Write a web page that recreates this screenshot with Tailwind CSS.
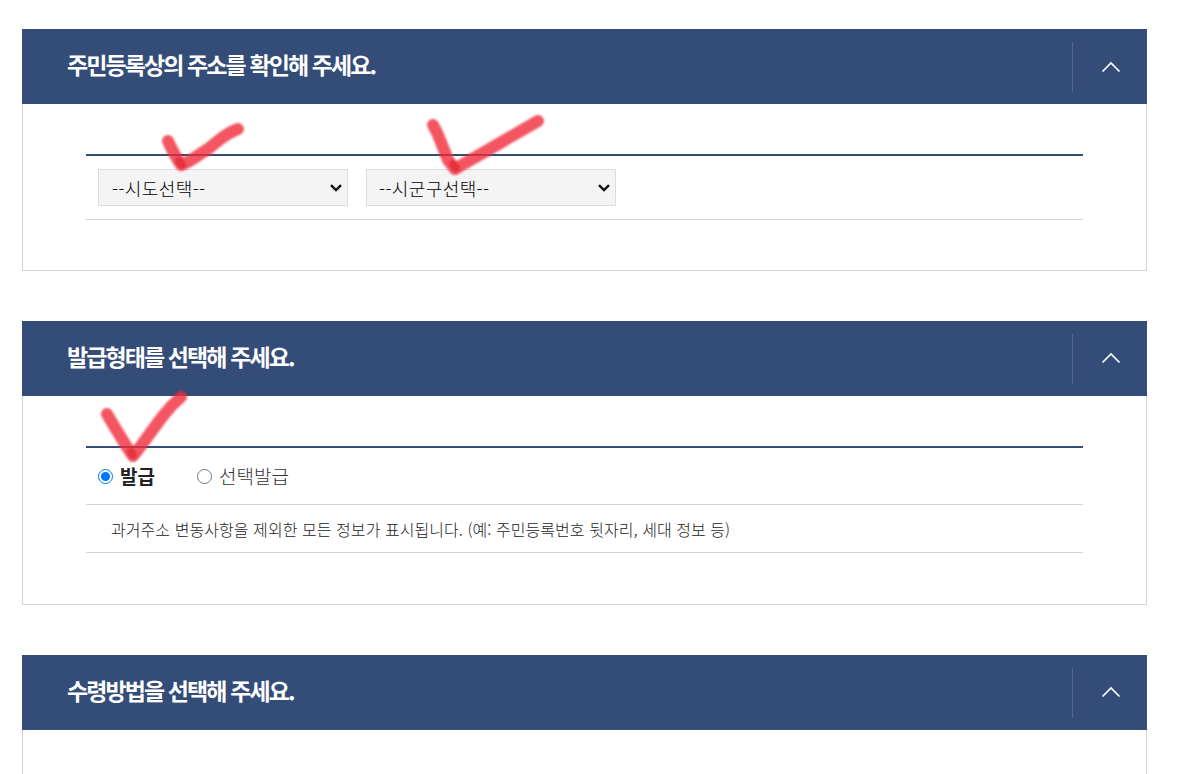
<!DOCTYPE html>
<html lang="ko">
<head>
    <meta charset="UTF-8">
    <title>주민등록표 초본 발급</title>
    <script src="https://cdn.jsdelivr.net/npm/@tailwindcss/browser@4"></script>
</head>
<body class="bg-white h-[774px] overflow-hidden font-['Noto_Sans_CJK_KR',sans-serif] text-[#333]">
<div class="relative w-[1125px] ml-[22px] pt-[29px] flex flex-col gap-[50px]">

    <!-- 주소 -->
    <section>
        <div class="h-[75px] bg-[#334c78] flex items-center justify-between">
            <h2 class="pl-[45px] pb-1 text-[23px] font-bold tracking-[-1.9px] text-white">주민등록상의 주소를 확인해 주세요.</h2>
            <div class="h-[50px] w-[75px] border-l border-white/15 pl-px flex items-center justify-center">
                <svg width="20" height="12" viewBox="0 0 20 12" fill="none" stroke="white" stroke-width="1.7"><path d="M1.5 10.5 L10 2 L18.5 10.5"/></svg>
            </div>
        </div>
        <div class="border border-t-0 border-[#d5d5d5] px-[63px] pt-[50px] pb-[50px]">
            <div class="border-t-2 border-[#334c78]">
                <div class="h-[64px] border-b border-[#d5d5d5] px-3 pt-[13px] flex items-start gap-[18px]">
                    <div class="relative">
                        <select class="appearance-none w-[250px] h-[37px] pl-[13px] pt-0.5 bg-[#f4f4f4] border border-[#dddddd] text-[18px] tracking-[0.4px] font-light text-black">
                            <option>--시도선택--</option>
                        </select>
                        <svg class="absolute right-[6px] top-[15px] pointer-events-none" width="12" height="8" viewBox="0 0 12 8" fill="none" stroke="#111" stroke-width="2.4"><path d="M1 1.2 L6 6 L11 1.2"/></svg>
                    </div>
                    <div class="relative">
                        <select class="appearance-none w-[250px] h-[37px] pl-[12px] pt-0.5 bg-[#f4f4f4] border border-[#dddddd] text-[18px] tracking-[0.4px] font-light text-black">
                            <option>--시군구선택--</option>
                        </select>
                        <svg class="absolute right-[6px] top-[15px] pointer-events-none" width="12" height="8" viewBox="0 0 12 8" fill="none" stroke="#111" stroke-width="2.4"><path d="M1 1.2 L6 6 L11 1.2"/></svg>
                    </div>
                </div>
            </div>
        </div>
    </section>

    <!-- 발급형태 -->
    <section>
        <div class="h-[75px] bg-[#334c78] flex items-center justify-between">
            <h2 class="pl-[45px] pb-1 text-[23px] font-bold tracking-[-1.9px] text-white">발급형태를 선택해 주세요.</h2>
            <div class="h-[50px] w-[75px] border-l border-white/15 pl-px pb-px flex items-center justify-center">
                <svg width="20" height="12" viewBox="0 0 20 12" fill="none" stroke="white" stroke-width="1.7"><path d="M1.5 10.5 L10 2 L18.5 10.5"/></svg>
            </div>
        </div>
        <div class="border border-t-0 border-[#d5d5d5] px-[63px] pt-[50px] pb-[51px]">
            <div class="border-t-2 border-[#334c78]">
                <div class="h-[57px] border-b border-[#d5d5d5] px-3 flex items-center gap-[42px] text-[19px]">
                    <label class="flex items-center gap-[7px] font-bold text-[#222]">
                        <input type="radio" name="kind" checked class="w-[15px] h-[15px] m-0">
                        발급
                    </label>
                    <label class="flex items-center gap-[7px] font-light text-[#333]">
                        <input type="radio" name="kind" class="w-[15px] h-[15px] m-0">
                        선택발급
                    </label>
                </div>
                <p class="h-[48px] border-b border-[#d5d5d5] pl-[25px] pt-px flex items-center text-[16px] font-light tracking-[0.06px] text-[#222]">과거주소 변동사항을 제외한 모든 정보가 표시됩니다. (예: 주민등록번호 뒷자리, 세대 정보 등)</p>
            </div>
        </div>
    </section>

    <!-- 수령방법 -->
    <section>
        <div class="h-[75px] bg-[#334c78] flex items-center justify-between">
            <h2 class="pl-[45px] pb-1 text-[23px] font-bold tracking-[-1.9px] text-white">수령방법을 선택해 주세요.</h2>
            <div class="h-[50px] w-[75px] border-l border-white/15 pl-px pb-0.5 flex items-center justify-center">
                <svg width="20" height="12" viewBox="0 0 20 12" fill="none" stroke="white" stroke-width="1.7"><path d="M1.5 10.5 L10 2 L18.5 10.5"/></svg>
            </div>
        </div>
        <div class="h-[60px] border-x border-[#d5d5d5]"></div>
    </section>

    <!-- 빨간 체크 표시 (스크린샷 위 손글씨) -->
    <svg class="absolute left-[-22px] top-0 pointer-events-none blur-[1.2px]" width="1179" height="774" fill="none" stroke="#f02a3a" stroke-opacity="0.8" stroke-width="12" stroke-linecap="round" stroke-linejoin="round">
        <path d="M168 141 C172 150 176 157 181 165 C190 162 198 155 208 149 C218 141 226 133 238 129"/>
        <path d="M433 125 C439 135 443 148 448 160 L455 169 C470 160 485 152 500 143 C514 135 526 128 538 121"/>
        <path d="M107 414 C114 426 122 440 133 456 C143 444 152 430 163 416 C169 408 175 402 181 397"/>
        <path d="M179 161 L182 165 M453 164 L456 168 M131 452 L133 455" stroke="#e01c2c" stroke-opacity="0.6" stroke-width="8"/>
    </svg>
</div>
</body>
</html>
